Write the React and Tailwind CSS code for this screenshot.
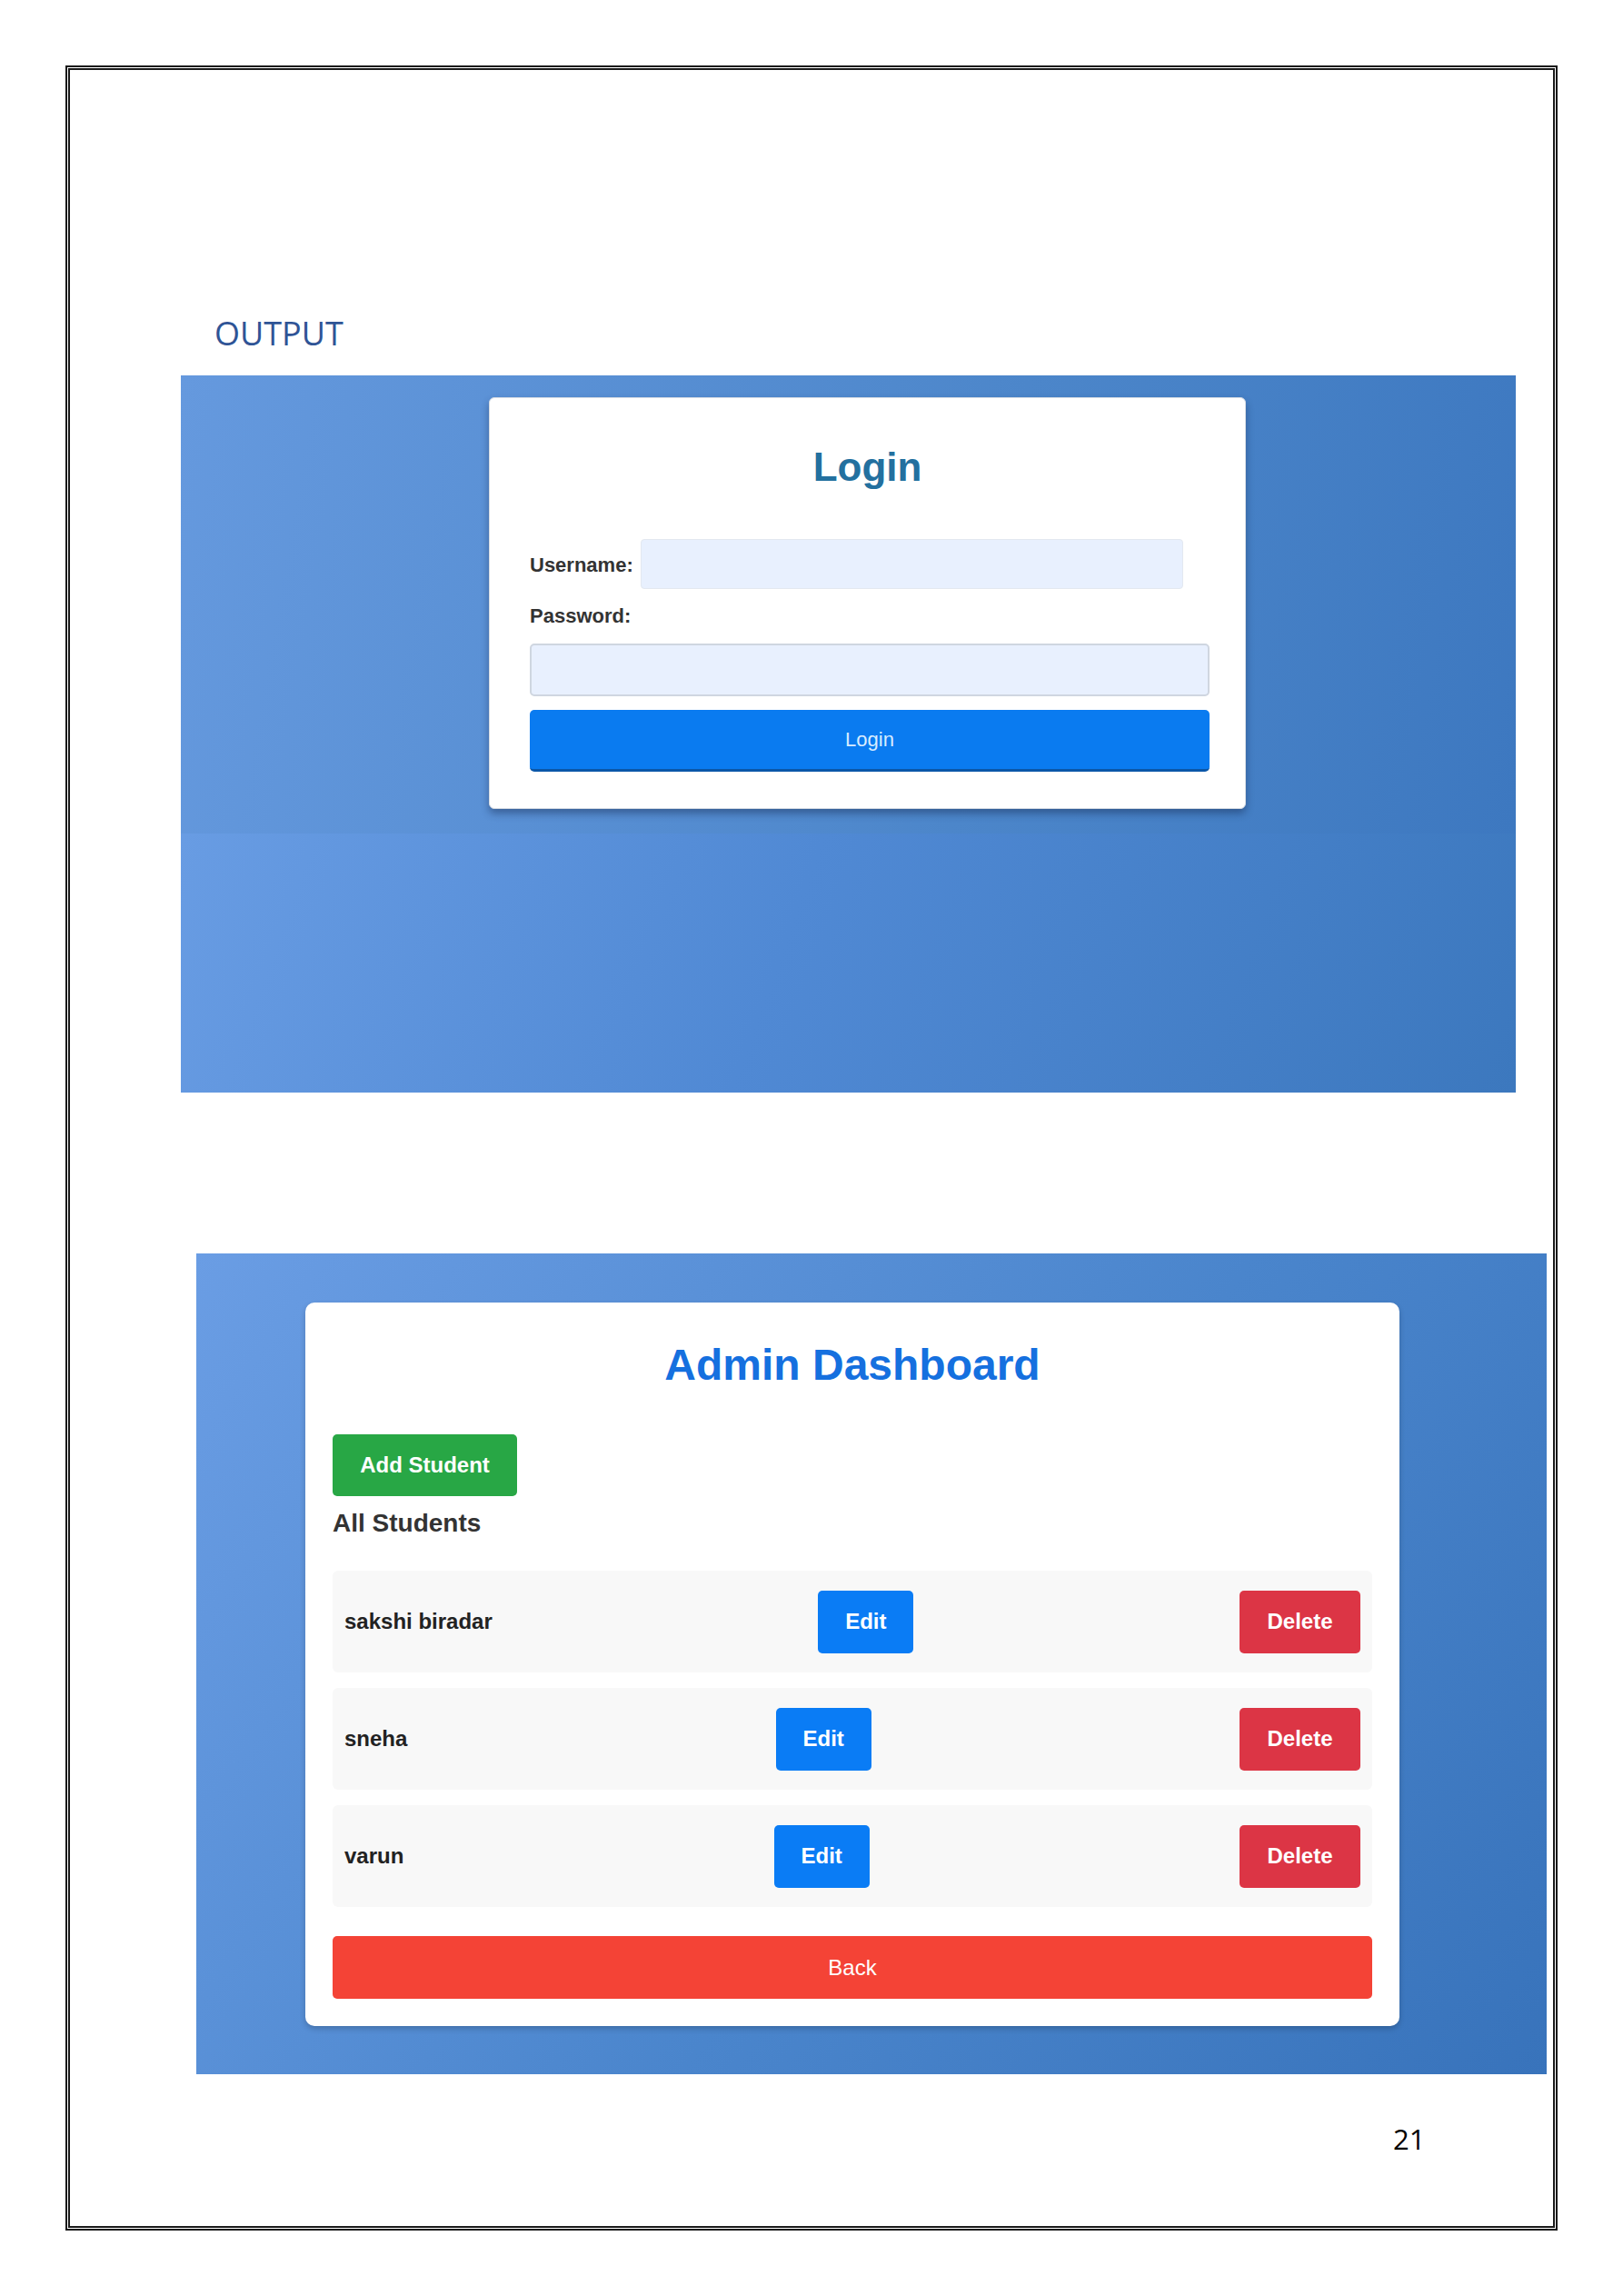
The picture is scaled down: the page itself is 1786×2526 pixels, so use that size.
const students = ['sakshi biradar', 'sneha', 'varun'];

export default function App() {
  return (
    <div className="w-[1786px] h-[2526px] bg-white pt-[72px] pl-[72px] font-['Open_Sans',sans-serif]">
      <div className="w-[1642px] h-[2382px] border-[5px] border-double border-[#1a1a1a] flex flex-col">
        <div className="mt-[268px] ml-[159px] text-[36px] leading-[44px] text-[#2f5496]">OUTPUT</div>

        {/* Login screenshot */}
        <div className="mt-[24px] ml-[122px] w-[1469px] h-[789px] flex flex-col font-['Liberation_Sans',Arial,sans-serif]">
          <div className="h-[504px] pl-[339px] pt-[24px] bg-[linear-gradient(100deg,#6599de,#4c86ca_60%,#3d78c0)]">
            <div className="w-[833px] h-[453px] bg-white rounded-[6px] border border-[#d5dbe3] shadow-[0_5px_8px_rgba(20,40,80,0.45)] pt-[51px] pl-[44px] pr-[41px] flex flex-col">
              <div className="text-center text-[44px] leading-[50px] font-bold text-[#23709f] -ml-[3px]">Login</div>
              <div className="mt-[54px] flex items-center">
                <span className="text-[22px] leading-[24px] font-bold text-[#333] w-[122px] pt-[2px]">Username:</span>
                <div className="w-[597px] h-[55px] bg-[#e8f0fe] rounded-[4px] border border-[#e3e8f0]"></div>
              </div>
              <div className="mt-[18px] text-[22px] leading-[24px] font-bold text-[#333]">Password:</div>
              <div className="mt-[18px] w-[748px] h-[58px] bg-[#e8f0fe] rounded-[5px] border-2 border-[#cfd6e0]"></div>
              <div className="mt-[15px] w-[748px] h-[68px] bg-[#0a7bf0] rounded-[5px] border-b-[3px] border-[#0b57a8] flex items-center justify-center text-[22px] text-[#d8ecff]">Login</div>
            </div>
          </div>
          <div className="h-[285px] bg-[linear-gradient(110deg,#689ce3,#5089d4_45%,#3c78be)]"></div>
        </div>

        {/* Admin dashboard screenshot */}
        <div className="mt-[177px] ml-[139px] w-[1486px] h-[903px] pl-[120px] pt-[54px] bg-[linear-gradient(125deg,#6a9de4,#4a85cc_55%,#3873bb)] font-['Liberation_Sans',Arial,sans-serif]">
          <div className="w-[1204px] h-[796px] bg-white rounded-[10px] shadow-[0_3px_6px_rgba(0,0,0,0.2)] px-[30px] pt-[41px] flex flex-col">
            <div className="text-center text-[48px] leading-[55px] font-bold text-[#1570df]">Admin Dashboard</div>
            <div className="mt-[49px] w-[203px] h-[68px] bg-[#28a745] rounded-[5px] flex items-center justify-center text-[24px] font-bold text-white">Add Student</div>
            <div className="mt-[14px] text-[28px] leading-[32px] font-bold text-[#333]">All Students</div>
            <div className="mt-[36px] flex flex-col gap-[17px]">
              {students.map((name) => (
                <div key={name} className="h-[112px] bg-[#f8f8f8] rounded-[6px] px-[13px] flex items-center justify-between">
                  <span className="text-[24px] font-bold text-[#222]">{name}</span>
                  <div className="w-[105px] h-[69px] bg-[#0a7cf5] rounded-[5px] flex items-center justify-center text-[24px] font-bold text-white">Edit</div>
                  <div className="w-[133px] h-[69px] bg-[#dc3545] rounded-[5px] flex items-center justify-center text-[24px] font-bold text-white">Delete</div>
                </div>
              ))}
            </div>
            <div className="mt-[32px] h-[69px] bg-[#f44336] rounded-[5px] flex items-center justify-center text-[24px] text-white">Back</div>
          </div>
        </div>

        <div className="mt-[51px] ml-[1456px] text-[31px] leading-[40px] text-black">21</div>
      </div>
    </div>
  );
}
